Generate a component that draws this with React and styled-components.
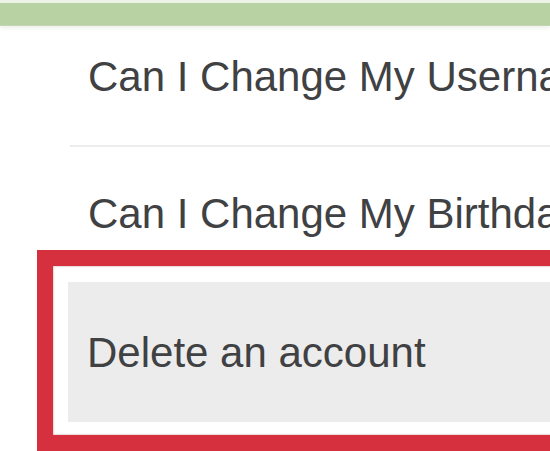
import React from 'react';
import styled, { createGlobalStyle } from 'styled-components';

const GlobalStyle = createGlobalStyle`
  body {
    margin: 0;
    background: #fff;
    overflow: hidden;
    font-family: "Liberation Sans", Arial, sans-serif;
  }
`;

const Page = styled.div`
  width: 550px;
  height: 451px;
  overflow: hidden;
  padding-top: 3px;
  box-sizing: border-box;
  background-image: linear-gradient(#eef3ea 0, #eef3ea 3px, #fff 3px);
`;

const GreenBar = styled.div`
  height: 22px;
  background: #b8d2a3;
  box-shadow: 0 1px 0 #c3d6b2, 0 3px 4px rgba(200, 215, 190, 0.35);
`;

const List = styled.div`
  margin-left: 70px;
`;

const Item = styled.div`
  padding: ${(p) => p.$top}px 0 ${(p) => p.$bottom}px 18px;
  border-bottom: ${(p) => (p.$divider ? '2px solid #ededed' : 'none')};
  font-size: 42px;
  line-height: 48px;
  color: #404143;
  white-space: nowrap;
`;

const Highlight = styled.div`
  margin: 12px 0 0 37px;
  width: 560px;
  border: 16px solid #d6303f;
  padding: 16px 0 13px 15px;
  background: #fff;
  box-shadow: inset 0 0 2px rgba(120, 20, 30, 0.5);
`;

const Panel = styled.div`
  height: 140px;
  box-sizing: border-box;
  padding: 47px 0 0 19px;
  background: #ececec;
  font-size: 42px;
  line-height: 48px;
  color: #404143;
  white-space: nowrap;
`;

export default function App() {
  return (
    <Page>
      <GlobalStyle />
      <GreenBar />
      <List>
        <Item $top={28} $bottom={44} $divider>
          Can I Change My Username?
        </Item>
        <Item $top={43} $bottom={0}>
          Can I Change My Birthday?
        </Item>
      </List>
      <Highlight>
        <Panel>Delete an account</Panel>
      </Highlight>
    </Page>
  );
}
